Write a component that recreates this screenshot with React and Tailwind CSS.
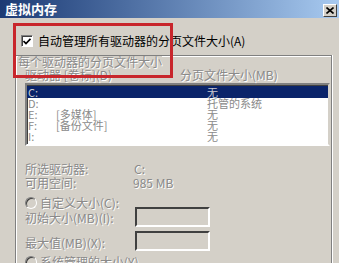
import React from "react"

const dim = "text-[#8a8a8a] [text-shadow:1px_1px_0_#ffffff]"

const drives = [
  { d: "C:", label: "", size: "无", selected: true },
  { d: "D:", label: "", size: "托管的系统" },
  { d: "E:", label: "[多媒体]", size: "无" },
  { d: "F:", label: "[备份文件]", size: "无" },
  { d: "I:", label: "", size: "无" },
]

function Radio() {
  return (
    <span className="w-[12px] h-[12px] rounded-full border border-t-[#808080] border-l-[#808080] border-b-white border-r-white bg-[#d4d0c8] shadow-[inset_1px_1px_0_#404040] shrink-0" />
  )
}

function Field() {
  return (
    <div className="w-[75px] h-[20px] border-2 border-t-[#404040] border-l-[#404040] border-b-white border-r-white bg-[#d4d0c8]" />
  )
}

export default function App() {
  return (
    <div className="w-[339px] h-[263px] overflow-hidden bg-[#d4d0c8] relative font-['Noto_Sans_CJK_SC',sans-serif] text-[12px] leading-[12px]">
      {/* title bar */}
      <div className="h-[18px] flex items-center justify-between pl-[5px] pr-[2px] bg-gradient-to-r from-[#1c3a74] to-[#a8caf0]">
        <span className="text-white font-bold text-[13px] leading-[14px]">虚拟内存</span>
        <div className="w-[14px] h-[13px] mt-[3px] bg-[#d4d0c8] border border-t-white border-l-white border-b-[#404040] border-r-[#404040] flex items-center justify-center">
          <svg width="8" height="7" viewBox="0 0 8 7">
            <path d="M0.5 0.5 L7.5 6.5 M7.5 0.5 L0.5 6.5" stroke="#000" strokeWidth="1.6" />
          </svg>
        </div>
      </div>

      {/* auto manage checkbox */}
      <div className="mt-[17px] h-[12px] pl-[21px] flex items-center gap-[5px]">
        <span className="w-[12px] h-[12px] bg-white border border-t-[#808080] border-l-[#808080] border-b-white border-r-white shadow-[inset_1px_1px_0_#404040] flex items-center justify-center shrink-0">
          <svg width="8" height="7" viewBox="0 0 8 7">
            <path d="M0.5 3 L3 5.5 L7.5 0.8" stroke="#000" strokeWidth="1.7" fill="none" />
          </svg>
        </span>
        <span className="text-black whitespace-nowrap">自动管理所有驱动器的分页文件大小(A)</span>
      </div>

      {/* group box */}
      <div className="ml-[15px] mt-[8px] w-[317px] h-[220px] border-t border-l border-r border-[#808080] shadow-[inset_1px_1px_0_#ffffff,1px_0_0_#ffffff]">
        <div className={`-mt-[4px] ml-[2px] h-[12px] inline-block bg-[#d4d0c8] whitespace-nowrap ${dim}`}>每个驱动器的分页文件大小</div>

        <div className={`mt-[1px] h-[12px] flex pl-[9px] whitespace-nowrap ${dim}`}>
          <span className="w-[155px]">驱动器 [卷标](D)</span>
          <span>分页文件大小(MB)</span>
        </div>

        {/* drive list */}
        <div className="mt-[2px] ml-[9px] w-[305px] h-[63px] border-2 border-t-[#808080] border-l-[#808080] border-b-white border-r-[#d4d0c8] bg-white shadow-[inset_1px_1px_0_#404040] pt-[1px] text-[11px]">
          {drives.map((r) => (
            <div
              key={r.d}
              className={`flex items-center whitespace-nowrap leading-[11px] ${r.selected ? "h-[12px] bg-[#0a246a] text-[#c8c8d0]" : "h-[11px] text-[#8a8a8a]"}`}
            >
              <span className="w-[29px] pl-[1px]">{r.d}</span>
              <span className="w-[151px]">{r.label}</span>
              <span>{r.size}</span>
            </div>
          ))}
        </div>

        {/* selected drive info */}
        <div className={`mt-[17px] pl-[9px] h-[12px] flex whitespace-nowrap ${dim}`}>
          <span className="w-[109px]">所选驱动器:</span>
          <span>C:</span>
        </div>
        <div className={`mt-[2px] pl-[9px] h-[12px] flex whitespace-nowrap ${dim}`}>
          <span className="w-[108px]">可用空间:</span>
          <span>985 MB</span>
        </div>

        <div className={`mt-[8px] pl-[9px] h-[12px] flex items-center gap-[3px] whitespace-nowrap ${dim}`}>
          <Radio />
          <span>自定义大小(C):</span>
        </div>

        <div className={`-mt-[2px] pl-[9px] h-[20px] flex items-center whitespace-nowrap ${dim}`}>
          <span className="w-[110px] pt-[2px]">初始大小(MB)(I):</span>
          <Field />
        </div>
        <div className={`mt-[4px] pl-[9px] h-[20px] flex items-center whitespace-nowrap ${dim}`}>
          <span className="w-[110px] pt-[4px]">最大值(MB)(X):</span>
          <Field />
        </div>

        <div className={`mt-[5px] pl-[9px] h-[12px] flex items-center gap-[3px] whitespace-nowrap ${dim}`}>
          <Radio />
          <span>系统管理的大小(Y)</span>
        </div>
      </div>

      {/* red highlight annotation */}
      <div className="absolute left-[13px] top-[23px] w-[160px] h-[55px] border-[3px] border-[#c8262c]" />
    </div>
  )
}
